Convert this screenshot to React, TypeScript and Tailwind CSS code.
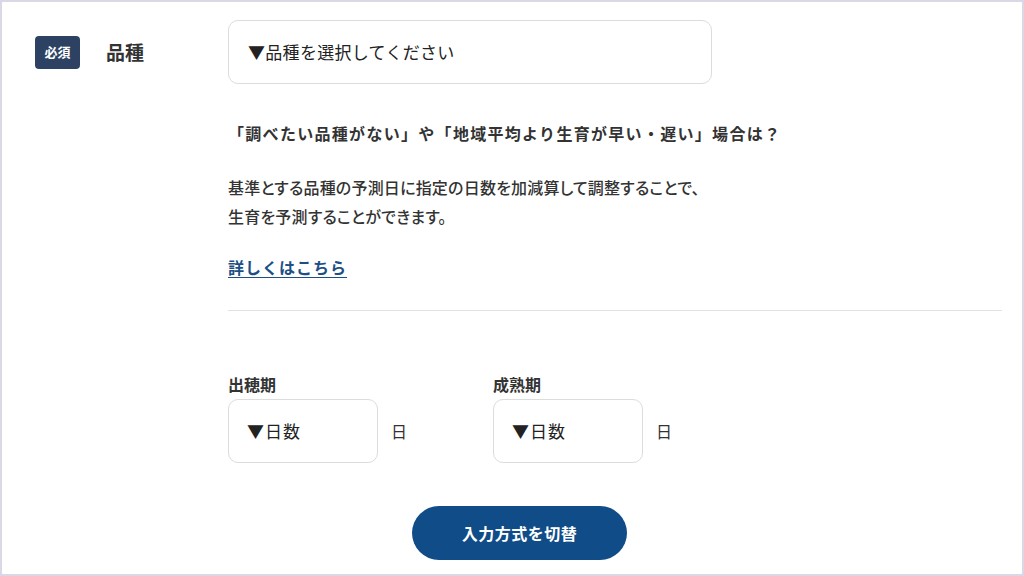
function DaySelect({ label }: { label: string }) {
  return (
    <div className="flex flex-col">
      <div className="text-[16px] font-semibold leading-[22px] text-[#333]">{label}</div>
      <div className="mt-[4px] flex items-center">
        <div className="flex h-[64px] w-[150px] items-center rounded-[10px] border border-[#dcdcdc] pl-[18px] text-[17px] tracking-[1px] text-[#222]">
          ▼日数
        </div>
        <span className="ml-[13px] text-[16px] text-[#333]">日</span>
      </div>
    </div>
  );
}

export default function App() {
  return (
    <div className="h-[576px] w-[1024px] overflow-hidden border-2 border-[#d8d8e6] bg-white font-['Noto_Sans_CJK_JP','Noto_Sans',sans-serif] text-[#333]">
      <div className="flex pl-[33px] pt-[18px]">
        <div className="flex h-[64px] w-[193px] shrink-0 items-center">
          <span className="flex h-[33px] w-[45px] items-center justify-center rounded-[4px] bg-[#2d4263] text-[13px] font-bold text-white">
            必須
          </span>
          <span className="ml-[26px] text-[19px] font-bold text-[#333]">品種</span>
        </div>

        <div className="flex w-[774px] flex-col">
          <div className="flex h-[64px] w-[484px] items-center rounded-[10px] border border-[#dcdcdc] pl-[19px] text-[17px] tracking-[0.3px] text-[#222]">
            ▼品種を選択してください
          </div>

          <p className="mt-[37px] text-[16px] font-bold leading-[24px] tracking-[1.3px]">
            「調べたい品種がない」や「地域平均より生育が早い・遅い」場合は？
          </p>

          <p className="mt-[28px] text-[16px] font-medium leading-[29px] tracking-[0.2px] text-[#333] [font-feature-settings:'palt']">
            基準とする品種の予測日に指定の日数を加減算して調整することで、
            <br />
            生育を予測することができます。
          </p>

          <a
            href="#"
            className="mt-[22px] w-fit text-[16px] font-bold leading-[29px] tracking-[1px] text-[#1d4f86] underline underline-offset-[3px]"
          >
            詳しくはこちら
          </a>

          <div className="mt-[28px] h-px w-full bg-[#e2e2e2]" />

          <div className="mt-[62px] flex gap-[86px]">
            <DaySelect label="出穂期" />
            <DaySelect label="成熟期" />
          </div>

          <button className="ml-[184px] mt-[43px] flex h-[54px] w-[215px] items-center justify-center rounded-full bg-[#0f4c88] text-[16px] font-bold tracking-[0.5px] text-white">
            入力方式を切替
          </button>
        </div>
      </div>
    </div>
  );
}
